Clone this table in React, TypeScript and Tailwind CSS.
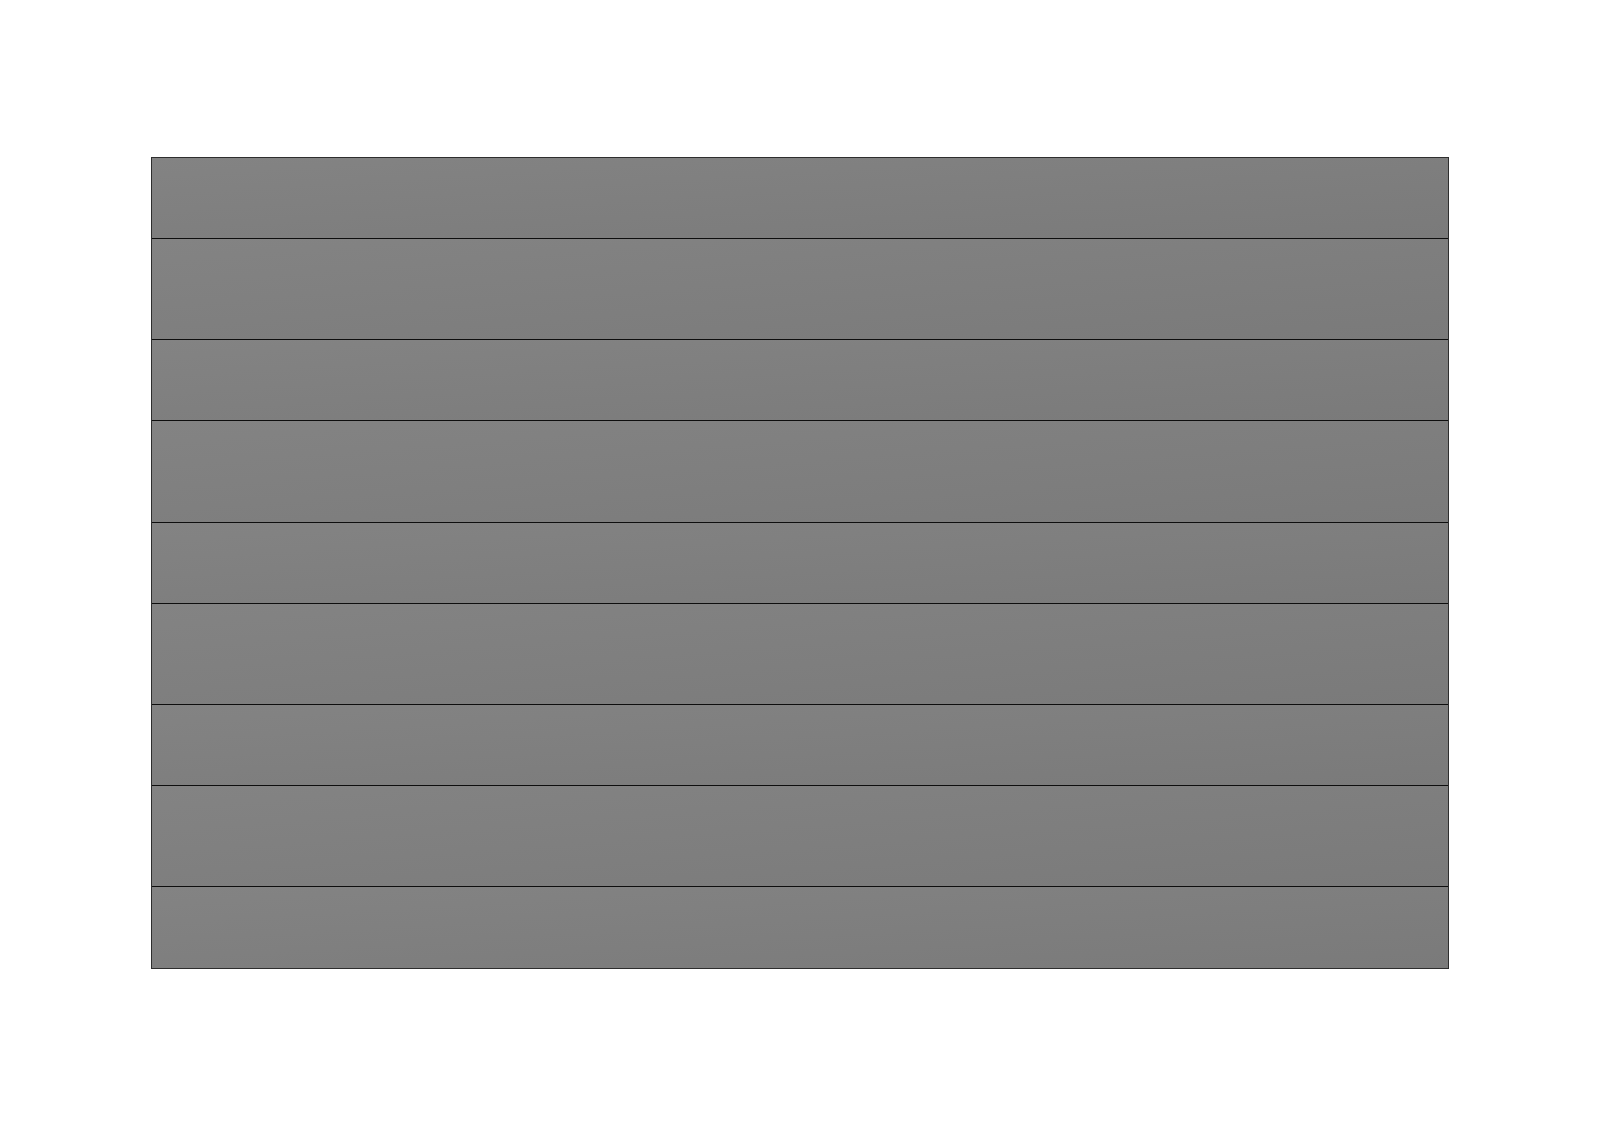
import React from 'react';

const rows = [4, 5, 4, 5, 4, 5, 4, 5, 4];

const App = () => {
    return (
        <div className="w-[1600px] h-[1125px] bg-white pt-[157px] pl-[151px]">
            <div className="w-[1298px] h-[812px] border border-[#2e2e2e] grid grid-rows-[4fr_5fr_4fr_5fr_4fr_5fr_4fr_5fr_4fr]">
                {rows.map((r, i) => (
                    <div
                        key={i}
                        className={`bg-gradient-to-br from-[#838383] to-[#7a7a7a] ${i < rows.length - 1 ? 'border-b border-[#0e0e0e]' : ''}`}
                    />
                ))}
            </div>
        </div>
    );
};

export default App;
